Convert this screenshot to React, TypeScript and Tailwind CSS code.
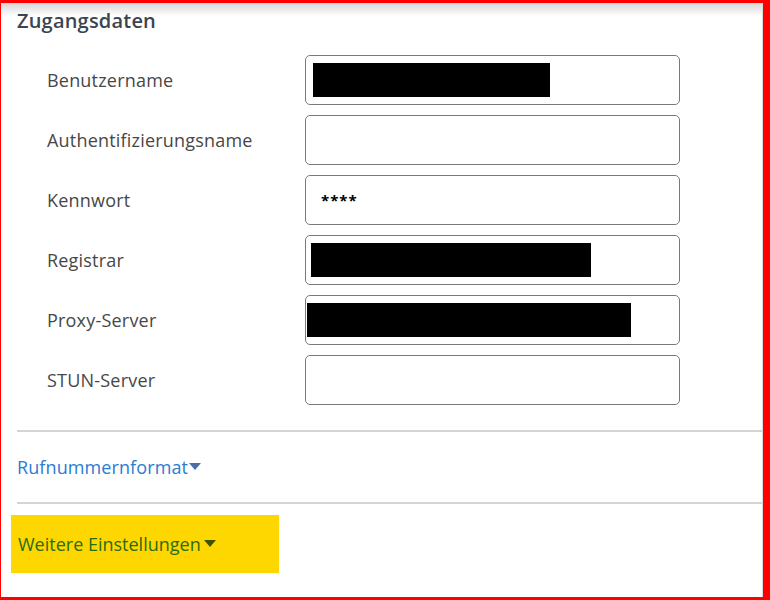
import React from "react";

type Row = { label: string; value?: string; redact?: { left: number; width: number } };

const rows: Row[] = [
  { label: "Benutzername", redact: { left: 7, width: 237 } },
  { label: "Authentifizierungsname" },
  { label: "Kennwort", value: "****" },
  { label: "Registrar", redact: { left: 5, width: 280 } },
  { label: "Proxy-Server", redact: { left: 1, width: 324 } },
  { label: "STUN-Server" },
];

function Caret({ className }: { className: string }) {
  return (
    <svg viewBox="0 0 12 8" className={className} aria-hidden>
      <path d="M0 0h12L6 7z" fill="currentColor" />
    </svg>
  );
}

export default function App() {
  return (
    <div className="h-[600px] w-[770px] overflow-hidden border-t-[3px] border-r-[7px] border-b-[3px] border-l border-[#ff0000] bg-white font-['Open_Sans',sans-serif]">
      <div className="h-full border-r border-[#d9d9d9] bg-[linear-gradient(to_bottom,#d6d6d6_0px,#ffffff_13px)] pl-[16px]">
        {/* Heading */}
        <h2 className="pt-[5px] text-[20px] leading-[26px] font-semibold tracking-[0.2px] text-[#3c4450]">
          Zugangsdaten
        </h2>

        {/* Form rows */}
        <div className="mt-[21px] flex flex-col gap-[10px]">
          {rows.map((row) => (
            <div key={row.label} className="flex items-center">
              <span className="w-[288px] pl-[30px] text-[18px] tracking-[0.2px] text-[#474747]">{row.label}</span>
              <div className="relative flex h-[50px] w-[375px] items-center rounded-[5px] border border-[#7a7a7a] bg-white">
                {row.value && (
                  <span className="pl-[15px] text-[15px] font-bold tracking-[1px] text-black">{row.value}</span>
                )}
                {row.redact && (
                  <div
                    className="absolute top-[7px] h-[34px] bg-black"
                    style={{ left: row.redact.left, width: row.redact.width }}
                  />
                )}
              </div>
            </div>
          ))}
        </div>

        {/* Rufnummernformat */}
        <div className="mt-[25px] border-t-2 border-[#d4d4d4]">
          <button className="flex h-[70px] items-center text-[18px] tracking-[0.1px] text-[#2a7bd4]">
            <span>Rufnummernformat</span>
            <Caret className="ml-[1px] h-[8px] w-[12px] text-[#4a6ea8]" />
          </button>
        </div>

        {/* Weitere Einstellungen */}
        <div className="border-t-2 border-[#d4d4d4]">
          <div className="mt-[11px] -ml-[6px] flex h-[58px] w-[268px] items-center bg-[#ffd700] pl-[7px] text-[18px] text-[#2a6c12]">
            <span>Weitere Einstellungen</span>
            <Caret className="ml-[3px] h-[8px] w-[12px] text-[#3d5200]" />
          </div>
        </div>
      </div>
    </div>
  );
}
